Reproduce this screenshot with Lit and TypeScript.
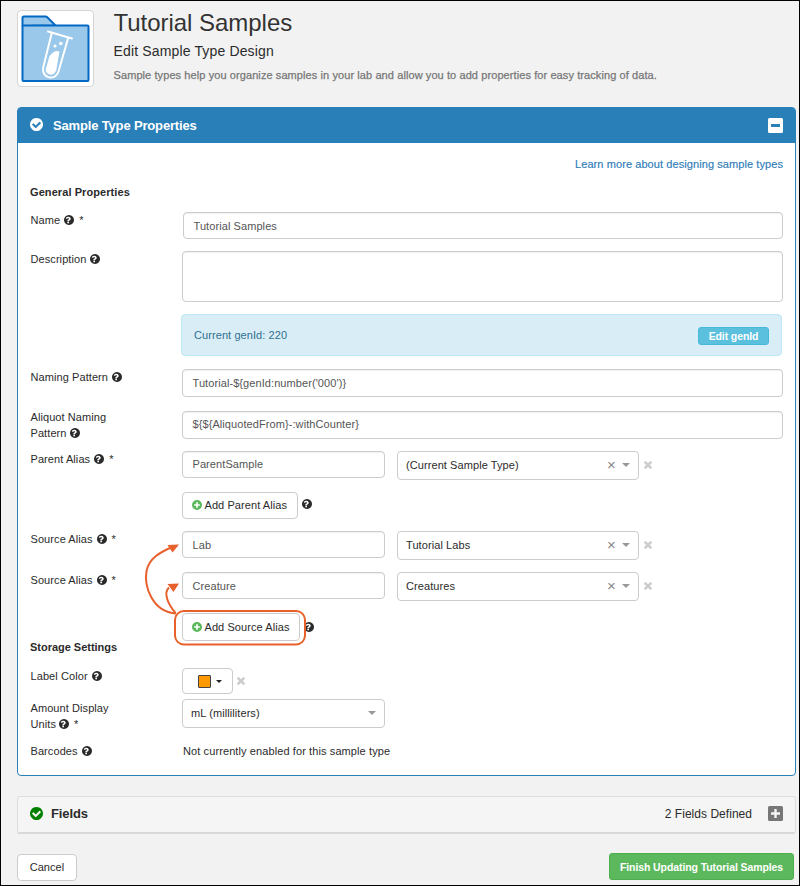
import { LitElement, html, css, svg, nothing } from "lit";
import { customElement, property } from "lit/decorators.js";

const DISC =
  "m252 162q0 209-103 385.5t-279.5 279.5-385.5 103-385.5-103-279.5-279.5-103-385.5 103-385.5 279.5-279.5 385.5-103 385.5 103 279.5 279.5 103 385.5z";

const ICONS: Record<string, { box: string; d: string }> = {
  help: {
    box: "128 128 1536 1536",
    d: "M896 1376v-192q0-14-9-23t-23-9h-192q-14 0-23 9t-9 23v192q0 14 9 23t23 9h192q14 0 23-9t9-23zm256-672q0-88-55.5-163t-138.5-116-170-41q-243 0-371 213-15 24 8 42l132 100q7 6 19 6 16 0 25-12 53-68 86-92 34-24 86-24 48 0 85.5 26t37.5 59q0 38-20 61t-68 45q-63 28-115.5 86.5t-52.5 125.5v36q0 14 9 23t23 9h192q14 0 23-9t9-23q0-19 21.5-49.5t54.5-49.5q32-18 49-28.5t46-35 44.5-48 28-60.5 12.5-81zm512 192q0 209-103 385.5t-279.5 279.5-385.5 103-385.5-103-279.5-279.5-103-385.5 103-385.5 279.5-279.5 385.5-103 385.5 103 279.5 279.5 103 385.5z",
  },
  check: {
    box: "128 128 1536 1536",
    d:
      "M1412 734q0-28-18-46l-91-90q-19-19-45-19t-45 19l-408 407-226-226q-19-19-45-19t-45 19l-91 90q-18 18-18 46 0 27 18 45l362 362q19 19 45 19 27 0 46-19l543-543q18-18 18-45z" +
      DISC,
  },
  times: {
    box: "302 366 1188 1188",
    d: "M1490 1322q0 40-28 68l-136 136q-28 28-68 28t-68-28l-294-294-294 294q-28 28-68 28t-68-28l-136-136q-28-28-28-68t28-68l294-294-294-294q-28-28-28-68t28-68l136-136q28-28 68-28t68 28l294 294 294-294q28-28 68-28t68 28l136 136q28 28 28 68t-28 68l-294 294 294 294q28 28 28 68z",
  },
  plus: {
    box: "0 0 12 12",
    d: "M6 0a6 6 0 1 0 0 12a6 6 0 1 0 0-12zM5 2.6h2v2.4h2.4v2h-2.4v2.4h-2v-2.4h-2.4v-2h2.4z",
  },
  minusBox: {
    box: "0 0 15 15",
    d: "M1.5 0h12a1.5 1.5 0 0 1 1.5 1.5v12a1.5 1.5 0 0 1-1.5 1.5h-12a1.5 1.5 0 0 1-1.5-1.5v-12a1.5 1.5 0 0 1 1.5-1.5zM3 6v3h9v-3z",
  },
  plusBox: {
    box: "0 0 15 15",
    d: "M1.5 0h12a1.5 1.5 0 0 1 1.5 1.5v12a1.5 1.5 0 0 1-1.5 1.5h-12a1.5 1.5 0 0 1-1.5-1.5v-12a1.5 1.5 0 0 1 1.5-1.5zM6.3 3v3.3h-3.3v2.4h3.3v3.3h2.4v-3.3h3.3v-2.4h-3.3v-3.3z",
  },
};

@customElement("ui-icon")
class UiIcon extends LitElement {
  @property() name = "help";
  static styles = css`
    :host { display: inline-block; width: 10px; height: 10px; flex: none; }
    svg { display: block; width: 100%; height: 100%; fill: currentColor; fill-rule: evenodd; }
  `;
  render() {
    const i = ICONS[this.name];
    return html`<svg viewBox=${i.box}>${svg`<path d=${i.d}></path>`}</svg>`;
  }
}

@customElement("form-row")
class FormRow extends LitElement {
  @property() label = "";
  @property() second = "";
  @property({ type: Boolean }) required = false;
  static styles = css`
    :host { display: flex; align-items: flex-start; }
    .label { width: 151.5px; margin-left: 0.5px; flex: none; line-height: 16px; }
    .line { display: flex; align-items: center; height: 16px; white-space: pre; }
    .gap { margin-left: 4px; }
    .tight { margin-left: 3px; }
    .star { margin-left: 5px; }
    .content { flex: 1; display: flex; align-items: flex-start; }
  `;
  render() {
    const marks = html`<ui-icon class=${this.second ? "tight" : "gap"} name="help"></ui-icon>${this.required
        ? html`<span class="star">*</span>`
        : nothing}`;
    return html`
      <div class="label">
        ${this.label
          ? html`<div class="line">${this.label}${this.second ? nothing : marks}</div>`
          : nothing}
        ${this.second ? html`<div class="line">${this.second}${marks}</div>` : nothing}
      </div>
      <div class="content"><slot></slot></div>
    `;
  }
}

@customElement("app-root")
class AppRoot extends LitElement {
  static styles = css`
    * { box-sizing: border-box; }
    :host {
      display: block; box-sizing: border-box; position: relative;
      width: 800px; height: 886px; overflow: hidden;
      border: 1px solid #000; background: #f2f2f2; color: #2b2b2b;
      padding: 9px 3px 0 16px;
      font: 11px/16px "Liberation Sans", Arial, sans-serif;
      letter-spacing: 0.08px;
    }
    .head { display: flex; height: 77px; margin-bottom: 20px; }
    .thumb { width: 77px; height: 77px; border: 1px solid #d5d5d5; border-radius: 4px; background: #fff; }
    .thumb svg { display: block; width: 75px; height: 75px; }
    .titles { padding-left: 19.5px; white-space: nowrap; }
    .title { font-size: 24px; line-height: 28px; letter-spacing: -0.03px; margin-top: -1px; color: #333; }
    .subtitle { font-size: 14px; line-height: 18px; margin-top: 5px; letter-spacing: 0.15px; }
    .lead { color: #777; margin-top: 7px; letter-spacing: 0.088px; -webkit-text-stroke: 0.25px #777; }

    .panel { position: relative; width: 779px; height: 669px; border: 1px solid #2980b9; border-radius: 4px; background: #fff; }
    .bar { display: flex; align-items: center; height: 35px; padding: 0 12px; background: #2980b9; color: #fff; border-radius: 2px 2px 0 0; }
    .tick { width: 13px; height: 13px; }
    .bar .tick { margin-top: -2px; }
    .bar .name { flex: 1; margin-left: 10px; font-weight: bold; font-size: 13px; letter-spacing: -0.16px; }
    .square { width: 15px; height: 15px; }
    .body { padding: 0 12px; }
    .learn { height: 41px; padding-top: 13px; text-align: right; color: #2e7cb8; -webkit-text-stroke: 0.15px #2e7cb8; }
    .section { font-weight: bold; height: 16px; }
    .general { margin-bottom: 12px; }
    .storage { letter-spacing: -0.02px; }

    .ctl { border: 1px solid #ccc; border-radius: 4px; background: #fff; display: flex; align-items: center; }
    .input { width: 601px; height: 28px; padding: 0 9.5px; color: #555; box-shadow: inset 0 1px 1px rgba(0, 0, 0, 0.06); }
    .first { width: 600px; height: 27px; margin-left: 1px; }
    .area { height: 51px; }
    .half { width: 203px; height: 27px; }
    .select { width: 242px; height: 29px; padding: 0 8px 2px; margin-left: 12px; }
    .grow { flex: 1; }
    .clear { color: #888; margin-right: 7px; font-size: 15px; letter-spacing: 0; width: 8px; text-align: center; }
    .caret { border: 4px solid transparent; border-bottom: 0; border-top-color: #999; }
    .remove { width: 8px; height: 8px; margin: 10px 0 0 5px; color: #ccc; }
    .info { width: 601px; height: 42px; margin-left: -1px; padding: 0 12px; display: flex; align-items: center; background: #d9edf7; border: 1px solid #bce8f1; border-radius: 4px; color: #31708f; }
    .edit { width: 71px; height: 18px; border: 1px solid #46b8da; border-radius: 3px; background: #5bc0de; color: #fff; font-weight: bold; font-size: 10.5px; letter-spacing: -0.1px; text-align: center; line-height: 17px; margin-top: 1px; }
    .add { width: 116px; height: 27px; padding: 0 0 1px 9px; white-space: nowrap; }
    .add ui-icon { color: #5cb85c; margin-right: 2.5px; }
    .side { margin: 7px 0 0 3.5px; }
    .wide { width: 118px; height: 28px; padding-bottom: 0; }
    .wide + .side { margin-top: 8.5px; }

    .r-name { height: 39px; }
    .r-desc { height: 63px; }
    .r-gen { height: 55px; }
    .r-naming { height: 40px; }
    .r-aliquot { height: 42px; }
    .r-aliquot .input { margin-top: 2px; padding-bottom: 2px; }
    .r-parent { height: 41px; }
    .r-parent .input { padding-bottom: 1px; }
    .r-addp { height: 39px; }
    .r-source { height: 41px; }
    .r-adds { height: 26px; }
    .r-color { height: 32px; margin-top: 13px; }
    .r-color .remove { margin: 9px 0 0 4px; }
    .r-amount { height: 43px; }
    .r-amount .select { width: 203px; margin: -1px 0 0; }
    .color { width: 51px; height: 26px; padding-left: 15px; }
    .swatch { width: 13px; height: 13px; border: 1px solid #444; background: #f90; margin-right: 5px; border-radius: 1px; }
    .dark { border-width: 3.5px; border-bottom: 0; border-top-color: #222; }
    .plain { margin-left: 1px; letter-spacing: 0.1px; }

    .marks { position: absolute; left: 122px; top: 428px; width: 175px; height: 115px; overflow: visible; fill: none; stroke: #e8602c; stroke-width: 2; }
    .marks .tip { fill: #e8602c; stroke: none; }

    .fields { display: flex; align-items: center; width: 779px; height: 38px; margin-top: 20px; padding: 0 12px 2px; background: #f5f5f5; border: 1px solid #ddd; border-bottom: 2px solid #d8d8d8; border-radius: 3px; }
    .fields .tick { color: #008000; }
    .fields .name { flex: 1; margin-left: 8px; font-weight: bold; font-size: 13px; letter-spacing: -0.1px; }
    .fields .count { font-size: 12px; margin-right: 16px; letter-spacing: 0.03px; }
    .fields .square { color: #777; }
    .foot { display: flex; justify-content: space-between; width: 777px; margin-top: 19px; }
    .cancel { width: 60px; height: 27px; margin-top: 1px; justify-content: center; padding-bottom: 2px; }
    .finish { width: 185px; height: 27px; border: 1px solid #4cae4c; border-radius: 3px; background: #5cb85c; color: #fff; font-weight: bold; font-size: 10.5px; letter-spacing: -0.09px; display: flex; align-items: center; justify-content: center; white-space: nowrap; padding-top: 1px; }
  `;

  private alias(label: string, value: string, target: string, cls: string) {
    return html`
      <form-row class=${cls} label=${label} required>
        <div class="ctl input half">${value}</div>
        <div class="ctl select">
          <span class="grow">${target}</span><span class="clear">×</span><span class="caret"></span>
        </div>
        <ui-icon class="remove" name="times"></ui-icon>
      </form-row>
    `;
  }

  render() {
    return html`
      <div class="head">
        <div class="thumb">
          <svg viewBox="0 0 75 75">
            <g fill="#99c8ea" stroke="#0368c3" stroke-width="2" stroke-linejoin="round">
              <path d="M4.5 15V7q0-1.500 1.500-1.500H27.500q1 0 2 1L37.500 14.500z"></path>
              <rect x="4.500" y="14.500" width="66" height="55.500" rx="1"></rect>
            </g>
            <g fill="none" stroke="#fff" stroke-width="2" stroke-linecap="round">
              <path d="M30 20.500L54 27.500"></path>
              <path d="M33.500 23L25.200 56.500C23 67.500 37.500 70.500 40.500 60.500L50 27.500"></path>
            </g>
            <path fill="#fff" d="M34.500 42q3-3 7-1.500L38.300 59q-2 5.500-6.500 4.500-4.800-1.300-4-5.500l3.700-13z"></path>
            <circle cx="37" cy="35" r="1.600" fill="#fff"></circle>
            <circle cx="42.800" cy="32.500" r="1.800" fill="#fff"></circle>
          </svg>
        </div>
        <div class="titles">
          <div class="title">Tutorial Samples</div>
          <div class="subtitle">Edit Sample Type Design</div>
          <div class="lead">Sample types help you organize samples in your lab and allow you to add properties for easy tracking of data.</div>
        </div>
      </div>

      <div class="panel">
        <div class="bar">
          <ui-icon class="tick" name="check"></ui-icon>
          <span class="name">Sample Type Properties</span>
          <ui-icon class="square" name="minusBox"></ui-icon>
        </div>
        <div class="body">
          <div class="learn">Learn more about designing sample types</div>
          <div class="section general">General Properties</div>
          <form-row class="r-name" label="Name" required>
            <div class="ctl input first">Tutorial Samples</div>
          </form-row>
          <form-row class="r-desc" label="Description"><div class="ctl input area"></div></form-row>
          <form-row class="r-gen">
            <div class="info"><span class="grow">Current genId: 220</span><span class="edit">Edit genId</span></div>
          </form-row>
          <form-row class="r-naming" label="Naming Pattern">
            <div class="ctl input">Tutorial-\${genId:number('000')}</div>
          </form-row>
          <form-row class="r-aliquot" label="Aliquot Naming" second="Pattern">
            <div class="ctl input">\${\${AliquotedFrom}-:withCounter}</div>
          </form-row>
          ${this.alias("Parent Alias", "ParentSample", "(Current Sample Type)", "r-parent")}
          <form-row class="r-addp">
            <div class="ctl add"><ui-icon name="plus"></ui-icon>Add Parent Alias</div>
            <ui-icon class="side" name="help"></ui-icon>
          </form-row>
          ${this.alias("Source Alias", "Lab", "Tutorial Labs", "r-source")}
          ${this.alias("Source Alias", "Creature", "Creatures", "r-source")}
          <form-row class="r-adds">
            <div class="ctl add wide"><ui-icon name="plus"></ui-icon>Add Source Alias</div>
            <ui-icon class="side" name="help"></ui-icon>
          </form-row>
          <div class="section storage">Storage Settings</div>
          <form-row class="r-color" label="Label Color">
            <div class="ctl color"><span class="swatch"></span><span class="caret dark"></span></div>
            <ui-icon class="remove" name="times"></ui-icon>
          </form-row>
          <form-row class="r-amount" label="Amount Display" second="Units" required>
            <div class="ctl select"><span class="grow">mL (milliliters)</span><span class="caret"></span></div>
          </form-row>
          <form-row label="Barcodes"><span class="plain">Not currently enabled for this sample type</span></form-row>
        </div>
        <svg class="marks" viewBox="140 536 175 115">
          <rect x="175" y="611" width="130" height="33.500" rx="9"></rect>
          <path d="M176 613.500C152 612 144 586 146.500 571C149 558 161 552 171 547.500"></path>
          <path d="M175.500 613C168 604 163 593 169 587.500"></path>
          <path class="tip" d="M179 544.500L167.500 545L172.500 552.500z"></path>
          <path class="tip" d="M179 583.500L167.500 584L173.500 592z"></path>
        </svg>
      </div>

      <div class="fields">
        <ui-icon class="tick" name="check"></ui-icon>
        <span class="name">Fields</span>
        <span class="count">2 Fields Defined</span>
        <ui-icon class="square" name="plusBox"></ui-icon>
      </div>
      <div class="foot">
        <div class="ctl cancel">Cancel</div>
        <div class="finish">Finish Updating Tutorial Samples</div>
      </div>
    `;
  }
}
